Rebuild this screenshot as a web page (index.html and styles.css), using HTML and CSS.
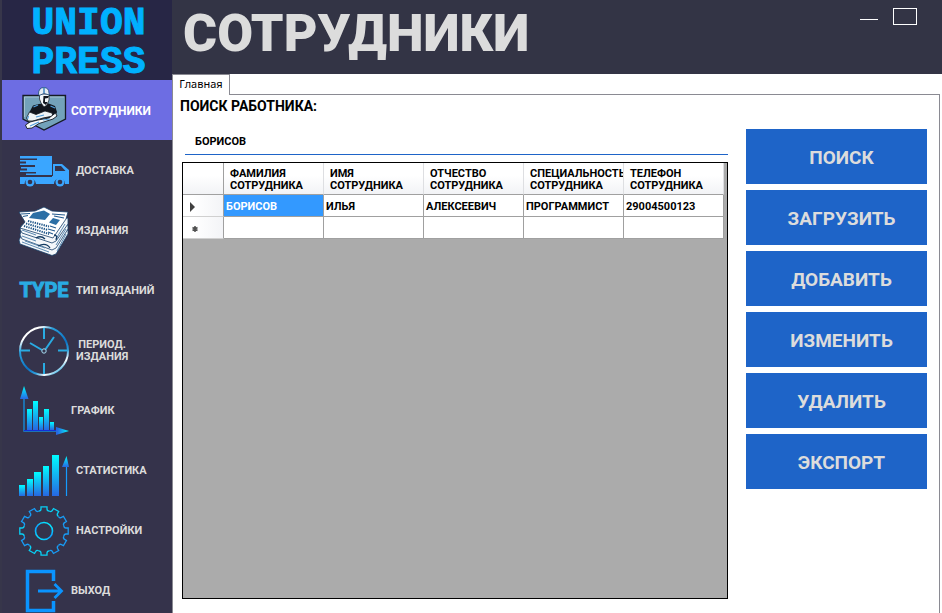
FILE: index.html
```html
<!DOCTYPE html>
<html lang="ru">
<head>
<meta charset="utf-8">
<title>Union Press — Сотрудники</title>
<link rel="stylesheet" href="styles.css">
</head>
<body>
<svg class="defs" width="0" height="0" aria-hidden="true">
  <defs>
    <linearGradient id="bar" x1="0" y1="0" x2="0" y2="1"><stop offset="0" stop-color="#00fdff"/><stop offset="1" stop-color="#2767e2"/></linearGradient>
    <linearGradient id="barx" x1="1" y1="0" x2="0" y2="0"><stop offset="0" stop-color="#00fdff"/><stop offset="0.9" stop-color="#2767e2"/></linearGradient>
    <linearGradient id="clock" x1="0.1" y1="0.1" x2="0.75" y2="1"><stop offset="0" stop-color="#ffffff"/><stop offset="0.1" stop-color="#ffffff"/><stop offset="0.25" stop-color="#29a0dc"/><stop offset="0.6" stop-color="#0b72c4"/><stop offset="0.75" stop-color="#2c9fdc"/><stop offset="0.88" stop-color="#ffffff"/><stop offset="1" stop-color="#29abe2"/></linearGradient>
    <linearGradient id="ring" x1="0.8" y1="0" x2="0.2" y2="1"><stop offset="0" stop-color="#04f0ff"/><stop offset="0.55" stop-color="#0c9cff"/><stop offset="1" stop-color="#04e0ff"/></linearGradient>
    <path id="tooth" d="M-5.3 -19.8Q-3 -20 -3 -22V-24.2H3V-22Q3 -20 5.3 -19.8"/>
  </defs>
</svg>
<div class="app">
  <aside class="sidebar">
    <div class="brand">UNION<br>PRESS</div>
    <nav class="menu">
      <a class="item item-close item-active" href="#">
        <svg class="icon" viewBox="0 0 50 50" aria-hidden="true">
          <path d="M4 10.500H46.500V34L25 45L4 34Z" fill="#73a2ba" stroke="#151b24" stroke-width="1.300"/>
          <path d="M5.500 12H45M5.500 12V32" fill="none" stroke="#bcd3dc" stroke-width="0.700"/>
          <path d="M20 19L14 20.500L10.500 27L12 32L20 34L36 32L38 27L36 21L31 19L28 18Z" fill="#11161e"/>
          <path d="M20.500 9H30V15L28 20L25 22L22 18L20.500 14Z" fill="#f0f5f8" stroke="#11161e" stroke-width="0.700"/>
          <path d="M24.500 11H30L29 13L26 13.500L26 17L28.500 17L27 20L24 18Z" fill="#11161e"/>
          <path d="M19.500 9Q19.500 2.500 25 2.500Q30 2.800 30 8L30.500 10L25 8.500L20 10.500Z" fill="#e7edf2" stroke="#24517e" stroke-width="0.900"/>
          <path d="M25 2.500V8" stroke="#478bc0" stroke-width="1.600"/>
          <path d="M14.500 22L19 20M31.500 21L36 23" stroke="#4f9edb" stroke-width="1.300"/>
          <path d="M10.500 27L7.500 33L9 36L14 36L24 33L34 31L33 28L26 26L17 29.500Z" fill="#eef4f7" stroke="#11161e" stroke-width="0.800"/>
          <path d="M36.500 28L38 31L34 34L20 38.500L13 43L8 43.500L6.500 40L11 37L19 35L30 33Z" fill="#f7fafb" stroke="#11161e" stroke-width="0.900"/>
          <path d="M9.500 31L8.500 34M17 32L25 30M20 37L11 41M24 35L31 34" fill="none" stroke="#4f9edb" stroke-width="1.200"/>
        </svg>
        <span>СОТРУДНИКИ</span>
      </a>
      <a class="item" href="#">
        <svg class="icon" viewBox="0 0 50 50" aria-hidden="true">
          <g fill="#3aa6ff">
            <path d="M1 11H33V30H7V28.500H17V27H1V25.500H8V23.500H2V22H16V20H1V18.500H7V16.500H1V15H18V13.500H1Z"/>
            <path d="M1 32H33V19H43L50 25V39H46Q46 33.500 40.500 33.500Q35 34 35 39H17Q16 33.500 11 33.500Q6 33.500 5.500 39H1Z"/>
            <circle cx="11" cy="37" r="4.500"/><circle cx="41" cy="37" r="4.500"/>
          </g>
          <path d="M33.500 31V18" stroke="#35334b" stroke-width="1"/>
          <path d="M36 21H42L46.500 26H36Z" fill="#35334b"/>
          <circle cx="11" cy="37" r="2.300" fill="#35334b"/><circle cx="41" cy="37" r="2.300" fill="#35334b"/>
        </svg>
        <span>ДОСТАВКА</span>
      </a>
      <a class="item" href="#">
        <svg class="icon" viewBox="0 0 50 50" aria-hidden="true">
          <g stroke="#163f68" stroke-width="0.800" stroke-linejoin="round">
            <path d="M2 31L0 35L1 39L33 50.500L37 49L49 29V25Z" fill="#f4f7fa"/>
            <path d="M2 26L1 30L3 34L33 45L37 43L49 24V20Z" fill="#f4f7fa"/>
            <path d="M3 20L1 24L3 28L33 38L37 36L49 19V13Z" fill="#f4f7fa"/>
            <path d="M0 7L16 6L25 2L33 6L49 7L47 14L34 33L1 23L6 17Z" fill="#fff"/>
          </g>
          <path d="M14 8L25 5.500L31 9L26 15L10 13Z" fill="#2b6fa5"/>
          <path d="M34 13L41 15L37 20L30 17.500Z" fill="#2b6fa5"/>
          <path d="M2 9L11 8.500M4 11.500L9 10.500M33 9L46 10M35 11L45 13" fill="none" stroke="#245c8f" stroke-width="1.200"/>
          <path d="M9 16L30 21.500M7 18.500L29 25M5 21L30 29" fill="none" stroke="#1c5487" stroke-width="2" stroke-dasharray="1.300 1"/>
          <path d="M31 21L37 23M29 24L36 26M29 27L34 29" fill="none" stroke="#245c8f" stroke-width="1.100"/>
          <path d="M3 25L17 30M3 31L17 36M6 36L26 43M3 37L30 47M37 34L46 19M37 40L47 24M38 46L47 29" fill="none" stroke="#5d8bb2" stroke-width="1"/>
          <path d="M17 33Q22 30 26 34M19 41Q27 37 31 43M35 30Q39 30 37 35" fill="none" stroke="#123a61" stroke-width="1.300"/>
        </svg>
        <span>ИЗДАНИЯ</span>
      </a>
      <a class="item" href="#">
        <span class="icon icon-type">TYPE</span>
        <span>ТИП ИЗДАНИЙ</span>
      </a>
      <a class="item" href="#">
        <svg class="icon" viewBox="0 0 50 50" aria-hidden="true">
          <circle cx="25" cy="26" r="24" fill="none" stroke="url(#clock)" stroke-width="2"/>
          <path d="M25 3V14M25 38V49M2 25.500H11M39 25.500H48M11 18L23 25M35 12L26 25" fill="none" stroke="#29abe2" stroke-width="2"/>
          <circle cx="25" cy="26" r="2.200" fill="#35334b" stroke="#a8dff5" stroke-width="1"/>
        </svg>
        <span class="two-line">ПЕРИОД.<br>ИЗДАНИЯ</span>
      </a>
      <a class="item item-close" href="#">
        <svg class="icon" viewBox="0 0 50 50" aria-hidden="true">
          <path d="M5 12V46H38" fill="none" stroke="#178bd8" stroke-width="1.400"/>
          <path d="M5 45.500H38" stroke="#1230d8" stroke-width="1"/>
          <path d="M5 1L9.500 14H1Z" fill="url(#bar)"/><path d="M50 46L37 50V42Z" fill="url(#barx)"/>
          <g fill="url(#bar)"><path d="M8 24H13V45H8Z"/><path d="M14 16H19V45H14Z"/><path d="M20 32H24V45H20Z"/><path d="M25 24H30V45H25Z"/><path d="M31 37H35V45H31Z"/></g>
        </svg>
        <span>ГРАФИК</span>
      </a>
      <a class="item" href="#">
        <svg class="icon" viewBox="0 0 50 50" aria-hidden="true">
          <g fill="url(#bar)"><path d="M0 40H6V51H0Z"/><path d="M8 34H14V51H8Z"/><path d="M15 27H22V51H15Z"/><path d="M24 21H30V51H24Z"/><path d="M33 10H40V51H33Z"/><path d="M47.500 11L50 22H43Z"/></g>
          <path d="M47.500 22V51" stroke="#159bff" stroke-width="1.200"/>
        </svg>
        <span>СТАТИСТИКА</span>
      </a>
      <a class="item" href="#">
        <svg class="icon" viewBox="0 0 50 50" aria-hidden="true">
          <g transform="translate(25 26)" fill="none" stroke-width="1.300">
            <g stroke="#08d0f5"><use href="#tooth"/><use href="#tooth" transform="rotate(30)"/><use href="#tooth" transform="rotate(180)"/><use href="#tooth" transform="rotate(210)"/><use href="#tooth" transform="rotate(270)"/></g>
            <g stroke="#189cf5"><use href="#tooth" transform="rotate(60)"/><use href="#tooth" transform="rotate(90)"/><use href="#tooth" transform="rotate(120)"/><use href="#tooth" transform="rotate(150)"/><use href="#tooth" transform="rotate(240)"/><use href="#tooth" transform="rotate(300)"/><use href="#tooth" transform="rotate(330)"/></g>
            <circle r="8.500" stroke="url(#ring)" stroke-width="1.600"/>
          </g>
        </svg>
        <span>НАСТРОЙКИ</span>
      </a>
      <a class="item item-close" href="#">
        <svg class="icon" viewBox="0 0 50 50" aria-hidden="true">
          <path d="M34.500 16V6.500H8.500V45.500H34.500V36" fill="none" stroke="#0a94ff" stroke-width="3.500"/>
          <path d="M19 26H42M35.500 19L42.500 26L35.500 33" fill="none" stroke="#0a94ff" stroke-width="2.800"/>
        </svg>
        <span>ВЫХОД</span>
      </a>
    </nav>
  </aside>
  <main class="main">
    <header class="header">
      <h1>СОТРУДНИКИ</h1>
      <div class="window-controls">
        <button class="minimize" type="button" aria-label="Свернуть"></button>
        <button class="maximize" type="button" aria-label="Развернуть"></button>
      </div>
    </header>
    <div class="tabs"><button class="tab" type="button">Главная</button><div class="tabs-line"></div></div>
    <section class="page">
      <div class="data">
        <label class="search-label" for="search">ПОИСК РАБОТНИКА:</label>
        <input class="search" id="search" type="text" value="БОРИСОВ">
        <div class="grid">
          <table>
            <colgroup><col class="col-mark"><col><col><col><col><col></colgroup>
            <thead><tr><th></th><th>ФАМИЛИЯ<br>СОТРУДНИКА</th><th>ИМЯ<br>СОТРУДНИКА</th><th>ОТЧЕСТВО<br>СОТРУДНИКА</th><th>СПЕЦИАЛЬНОСТЬ<br>СОТРУДНИКА</th><th>ТЕЛЕФОН<br>СОТРУДНИКА</th></tr></thead>
            <tbody>
              <tr><th><svg class="mark" viewBox="0 0 8 10" aria-hidden="true"><path d="M1 0L6 5L1 10Z" fill="#404040"/></svg></th><td class="selected">БОРИСОВ</td><td>ИЛЬЯ</td><td>АЛЕКСЕЕВИЧ</td><td>ПРОГРАММИСТ</td><td>29004500123</td></tr>
              <tr><th><svg class="mark mark-new" viewBox="0 0 8 10" aria-hidden="true"><path d="M4 2V8M1.500 3.500L6.500 6.500M6.500 3.500L1.500 6.500" stroke="#505050" stroke-width="1.500"/></svg></th><td></td><td></td><td></td><td></td><td></td></tr>
            </tbody>
          </table>
        </div>
      </div>
      <div class="actions">
        <button type="button">ПОИСК</button>
        <button type="button">ЗАГРУЗИТЬ</button>
        <button type="button">ДОБАВИТЬ</button>
        <button type="button">ИЗМЕНИТЬ</button>
        <button type="button">УДАЛИТЬ</button>
        <button type="button">ЭКСПОРТ</button>
      </div>
    </section>
  </main>
</div>
</body>
</html>
```
FILE: styles.css
```css
* { box-sizing: border-box; }
body { margin: 0; font-family: Roboto, "Liberation Sans", sans-serif; font-weight: 700; font-size: 11px; line-height: 12px; color: #000; background: #fff; }
button, input { font: inherit; border: 0; padding: 0; margin: 0; border-radius: 0; }
.defs { display: block; }
.app { display: flex; height: 100vh; overflow: hidden; }

.sidebar { flex: none; width: 172px; border-left: 2px solid #37364a; background: #35334b; }
.brand { height: 80px; padding: 4px 0 0 3px; background: #272645; color: #00b1ff; font-family: "Liberation Mono", monospace; font-size: 38px; line-height: 39px; text-align: center; -webkit-text-stroke: 1px #00b1ff; }
.item { display: flex; align-items: center; gap: 7px; height: 60px; padding-left: 17px; color: #dcdcdc; text-decoration: none; font-size: 11px; }
.item > span { padding-top: 2px; }
.item-close { gap: 2px; }
.item-active { background: #6d6de3; color: #fff; font-size: 12px; }
.item > .icon { flex: none; width: 50px; height: 50px; padding: 0; overflow: visible; }
.icon-type { color: #29abe2; font-size: 20px; line-height: 50px; text-align: center; -webkit-text-stroke: 1px #29abe2; }
.two-line { text-align: center; }

.main { flex: 1; min-width: 0; display: flex; flex-direction: column; }
.header { flex: none; display: flex; justify-content: space-between; height: 74px; padding: 8px 25px 0 11px; background: #333445; }
h1 { margin: 0; font-size: 52px; line-height: 52px; font-weight: 900; color: #dcdcdc; }
.window-controls { display: flex; gap: 15px; }
.minimize { width: 18px; height: 12px; background: none; border-bottom: 1px solid #fff; }
.maximize { width: 24px; height: 17px; background: none; border: 1px solid #fff; }

.tabs { flex: none; display: flex; height: 21px; padding-right: 2px; }
.tab { width: 58px; border: 1px solid #8a8a92; border-bottom: 0; background: #fff; color: #000; font: 400 11px/17px "Noto Sans", sans-serif; padding-bottom: 3px; }
.tabs-line { flex: 1; border-bottom: 1px solid #8a8a92; }
.page { flex: 1; display: flex; gap: 18px; margin-right: 2px; padding: 5px 12px 14px 8px; border: solid #8a8a92; border-width: 0 1px; }
.data { flex: 1; min-width: 0; display: flex; flex-direction: column; }
.search-label { margin-left: -1px; font-size: 14px; line-height: 12px; }
.search { height: 27px; margin: 16px 0 7px 4px; padding: 0 10px; border-bottom: 1px solid #1e64c8; background: none; outline: 0; color: #000; }
.grid { flex: 1; margin-left: 1px; border: 1px solid #000; background: #ababab; }
table { width: 541px; table-layout: fixed; border-collapse: separate; border-spacing: 0; }
.col-mark { width: 41px; }
th, td { height: 22px; padding: 2px 0 0 2px; overflow: hidden; white-space: nowrap; text-align: left; background: #fff; border-right: 1px solid #a0a0a0; border-bottom: 1px solid #a0a0a0; }
th { background: linear-gradient(90deg, #fff 0 10px, #f3f4f7); border-bottom-color: #d0d0d0; }
thead th { height: 32px; padding-left: 6px; background: linear-gradient(#fff 40%, #f2f3f6); border-right-color: #dedfe2; border-bottom-color: #a0a0a0; }
thead th:first-child { border-right-color: #a0a0a0; }
td.selected { background: #3399ff; color: #fff; }
.mark { display: block; width: 8px; height: 10px; margin-left: 4px; }
.mark-new { margin-left: 6px; }

.actions { flex: none; width: 181px; display: flex; flex-direction: column; gap: 6px; padding-top: 29px; }
.actions button { height: 55px; padding: 2px 0 0 10px; background: #1e64c8; color: #dcdcdc; font-size: 19px; line-height: 24px; }
```
